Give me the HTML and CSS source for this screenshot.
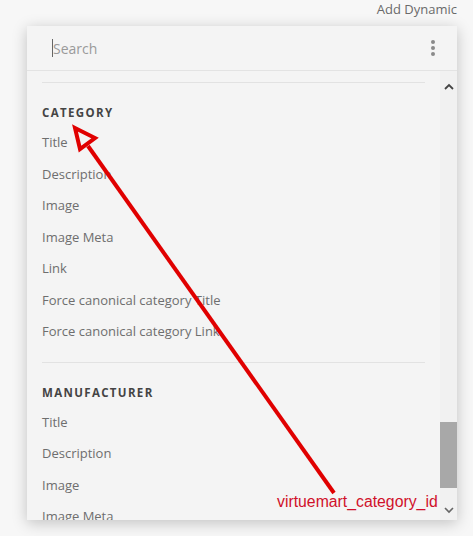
FILE: index.html
```html
<!DOCTYPE html>
<html lang="en">
<head>
    <meta charset="UTF-8">
    <title>Add Dynamic</title>
    <link rel="stylesheet" href="styles.css">
</head>
<body>
    <div class="top-link">Add Dynamic</div>
    <div class="panel">
        <div class="panel-head">
            <input class="search" type="text" placeholder="Search">
            <div class="kebab"><span></span><span></span><span></span></div>
        </div>
        <div class="panel-body">
            <div class="list">
                <div class="group">
                    <h4>CATEGORY</h4>
                    <div class="item">Title</div>
                    <div class="item">Description</div>
                    <div class="item">Image</div>
                    <div class="item">Image Meta</div>
                    <div class="item">Link</div>
                    <div class="item">Force canonical category Title</div>
                    <div class="item">Force canonical category Link</div>
                </div>
                <div class="group">
                    <h4>MANUFACTURER</h4>
                    <div class="item">Title</div>
                    <div class="item">Description</div>
                    <div class="item">Image</div>
                    <div class="item">Image Meta</div>
                </div>
            </div>
            <div class="scrollbar">
                <div class="arrow">
                    <svg width="10" height="7" viewBox="0 0 10 7"><path d="M1 6 L5 2 L9 6" fill="none" stroke="#444" stroke-width="1.8"/></svg>
                </div>
                <div class="track"><div class="thumb"></div></div>
                <div class="arrow arrow-down">
                    <svg width="10" height="7" viewBox="0 0 10 7"><path d="M1 1 L5 5 L9 1" fill="none" stroke="#666" stroke-width="1.6"/></svg>
                </div>
            </div>
        </div>
    </div>

    <!-- annotation drawn on top of the screenshot -->
    <svg class="annotation" width="473" height="536" viewBox="0 0 473 536">
        <line x1="334" y1="493" x2="88" y2="146" stroke="#e00000" stroke-width="4"/>
        <polygon points="75,128 95,138 80,149" fill="none" stroke="#e00000" stroke-width="4" stroke-linejoin="miter"/>
    </svg>
    <div class="note">virtuemart_category_id</div>
</body>
</html>
```
FILE: styles.css
```css
body {
    margin: 0;
    background-color: #f7f7f7;
    font-family: "Open Sans", sans-serif;
    position: relative;
    height: 536px;
    overflow: hidden;
}

.top-link {
    height: 18px;
    padding-right: 16px;
    text-align: right;
    font-size: 13px;
    line-height: 18px;
    color: #6a6a6a;
}

.panel {
    margin: 8px 0 0 27px;
    width: 430px;
    height: 494px;
    background-color: #f4f4f4;
    box-shadow: 0 3px 14px rgba(0, 0, 0, 0.22);
    display: flex;
    flex-direction: column;
}

.panel-head {
    height: 44px;
    flex-shrink: 0;
    display: flex;
    align-items: center;
    padding: 0 22px 0 25px;
    border-bottom: 1px solid #e3e3e3;
}

.search {
    flex: 1;
    border: none;
    background: transparent;
    font-family: "Open Sans", sans-serif;
    font-size: 14px;
    color: #555;
    padding: 0;
    border-left: 1px solid #666;
    height: 18px;
    outline: none;
}

.search::placeholder {
    color: #9a9a9a;
}

.kebab {
    display: flex;
    flex-direction: column;
    gap: 2px;
}

.kebab span {
    width: 4px;
    height: 4px;
    border-radius: 50%;
    background-color: #8a8a8a;
}

.panel-body {
    flex: 1;
    display: flex;
    min-height: 0;
}

.list {
    flex: 1;
    overflow: hidden;
    padding: 0 15px;
}

.group {
    border-top: 1px solid #e2e2e2;
    margin-top: 11px;
    padding-top: 22px;
}

.group + .group {
    margin-top: 14px;
}

.group h4 {
    margin: 0 0 6px;
    font-family: "Open Sans", sans-serif;
    font-size: 11.5px;
    font-weight: 700;
    letter-spacing: 1.35px;
    color: #444;
    line-height: 16px;
}

.item {
    font-size: 13px;
    line-height: 31.5px;
    color: #6e6e6e;
}

.scrollbar {
    width: 17px;
    display: flex;
    flex-direction: column;
    background-color: #f1f1f1;
}

.arrow {
    height: 30px;
    display: flex;
    align-items: center;
    justify-content: center;
}

.arrow-down {
    height: 32px;
    align-items: flex-end;
    padding-bottom: 6px;
    box-sizing: border-box;
}

.track {
    flex: 1;
    display: flex;
    flex-direction: column;
    justify-content: flex-end;
}

.thumb {
    height: 66px;
    background-color: #a8a8a8;
}

.annotation {
    position: absolute;
    left: 0;
    top: 0;
}

.note {
    position: absolute;
    left: 277px;
    top: 493px;
    font-family: "Liberation Sans", Arial, sans-serif;
    font-size: 15.8px;
    color: #d0102a;
}
```
